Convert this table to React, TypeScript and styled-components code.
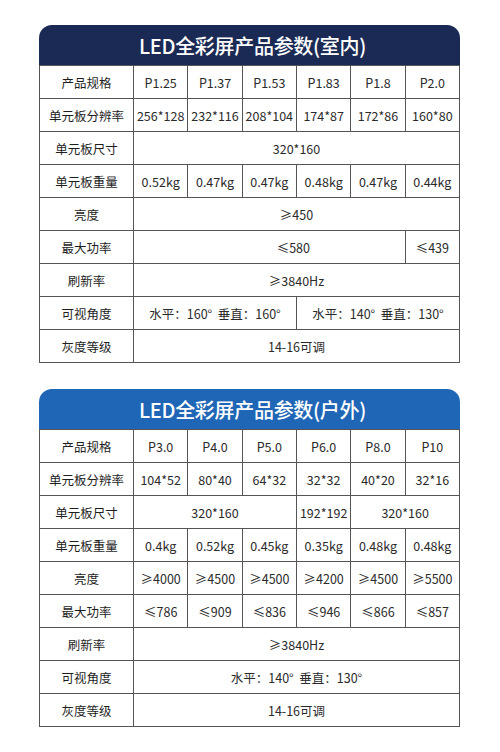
import React from "react";
import styled, { createGlobalStyle } from "styled-components";

type Cell = { text: string; span?: number; shift?: number };
type Row = { label: string; cells: Cell[] };

type SpecTableProps = {
  title: string;
  color: string;
  rows: Row[];
};

const c = (text: string, span = 1, shift = 0): Cell => ({ text, span, shift });

const indoorRows: Row[] = [
  { label: "产品规格", cells: ["P1.25", "P1.37", "P1.53", "P1.83", "P1.8", "P2.0"].map((t) => c(t)) },
  {
    label: "单元板分辨率",
    cells: ["256*128", "232*116", "208*104", "174*87", "172*86", "160*80"].map((t) => c(t)),
  },
  { label: "单元板尺寸", cells: [c("320*160", 6)] },
  {
    label: "单元板重量",
    cells: ["0.52kg", "0.47kg", "0.47kg", "0.48kg", "0.47kg", "0.44kg"].map((t) => c(t)),
  },
  { label: "亮度", cells: [c("≥450", 6)] },
  { label: "最大功率", cells: [c("≤580", 5, 48), c("≤439")] },
  { label: "刷新率", cells: [c("≥3840Hz", 6)] },
  { label: "可视角度", cells: [c("水平：160°  垂直：160°", 3), c("水平：140°  垂直：130°", 3)] },
  { label: "灰度等级", cells: [c("14-16可调", 6)] },
];

const outdoorRows: Row[] = [
  { label: "产品规格", cells: ["P3.0", "P4.0", "P5.0", "P6.0", "P8.0", "P10"].map((t) => c(t)) },
  {
    label: "单元板分辨率",
    cells: ["104*52", "80*40", "64*32", "32*32", "40*20", "32*16"].map((t) => c(t)),
  },
  { label: "单元板尺寸", cells: [c("320*160", 3), c("192*192"), c("320*160", 2)] },
  {
    label: "单元板重量",
    cells: ["0.4kg", "0.52kg", "0.45kg", "0.35kg", "0.48kg", "0.48kg"].map((t) => c(t)),
  },
  {
    label: "亮度",
    cells: ["≥4000", "≥4500", "≥4500", "≥4200", "≥4500", "≥5500"].map((t) => c(t)),
  },
  {
    label: "最大功率",
    cells: ["≤786", "≤909", "≤836", "≤946", "≤866", "≤857"].map((t) => c(t)),
  },
  { label: "刷新率", cells: [c("≥3840Hz", 6)] },
  { label: "可视角度", cells: [c("水平：140°  垂直：130°", 6)] },
  { label: "灰度等级", cells: [c("14-16可调", 6)] },
];

const SpecTable = ({ title, color, rows }: SpecTableProps) => {
  return (
    <Card>
      <Header $bg={color}>{title}</Header>
      <Table>
        <colgroup>
          <col style={{ width: 94 }} />
          {[0, 1, 2, 3, 4, 5].map((i) => (
            <col key={i} />
          ))}
        </colgroup>
        <tbody>
          {rows.map((row) => (
            <tr key={row.label}>
              <Label>{row.label}</Label>
              {row.cells.map((cell, idx) => (
                <Value key={idx} colSpan={cell.span} $shift={cell.shift}>
                  {cell.text}
                </Value>
              ))}
            </tr>
          ))}
        </tbody>
      </Table>
    </Card>
  );
};

const App = () => {
  return (
    <>
      <GlobalStyle />
      <Page>
        <SpecTable title="LED全彩屏产品参数(室内)" color="#1b2a55" rows={indoorRows} />
        <SpecTable title="LED全彩屏产品参数(户外)" color="#1f66b6" rows={outdoorRows} />
      </Page>
    </>
  );
};
export default App;

const GlobalStyle = createGlobalStyle`
  body {
    margin: 0;
    background: #fff;
    font-family: "Noto Sans CJK SC", "Noto Sans", sans-serif;
    color: #222;
  }
`;
const Page = styled.div`
  width: 500px;
  padding: 25px 40px 0 39px;
  box-sizing: border-box;
  display: flex;
  flex-direction: column;
  gap: 26px;
`;
const Card = styled.div`
  width: 421px;
`;
const Header = styled.div<{ $bg: string }>`
  height: 40px;
  background: ${(p) => p.$bg};
  border-radius: 13px 13px 0 0;
  color: #fff;
  font-size: 20px;
  font-weight: 500;
  display: flex;
  align-items: center;
  justify-content: center;
  padding-left: 6px;
  letter-spacing: -0.3px;
`;
const Table = styled.table`
  width: 100%;
  table-layout: fixed;
  border-collapse: collapse;
  border: 1px solid #555;
  border-top: none;
  font-size: 12.5px;
  tr {
    height: 33px;
  }
`;
const Label = styled.td`
  border: 1px solid #555;
  text-align: center;
  padding: 0;
  color: #1e1e1e;
`;
const Value = styled.td<{ $shift?: number }>`
  border: 1px solid #555;
  text-align: center;
  padding: 0 0 0 ${(p) => p.$shift || 0}px;
  white-space: pre;
  color: #2a2a2a;
`;
